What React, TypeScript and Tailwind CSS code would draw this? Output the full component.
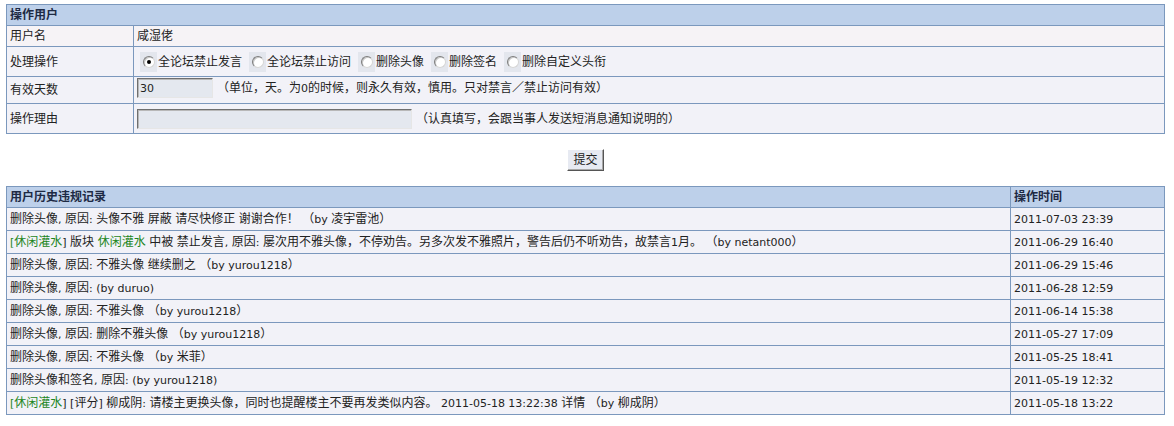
import React from "react";

function T({ s }: { s: string }) {
  const parts = s.split(/([\u0020-\u007e]+)/);
  return (
    <>
      {parts.map((p, i) =>
        p === "" ? null : /[\u0020-\u007e]/.test(p[0]) ? (
          <span key={i} className="font-['DejaVu_Sans',sans-serif] text-[11px]">
            {p}
          </span>
        ) : (
          <span key={i}>{p}</span>
        )
      )}
    </>
  );
}

function Radio({ checked }: { checked?: boolean }) {
  return (
    <span className="inline-flex items-center justify-center w-[17px] h-[20px] bg-[#e3e6ed] ml-[3px] shrink-0">
      <span className="relative block w-[12px] h-[12px] rounded-full bg-white border border-t-[#7c7c7c] border-l-[#7c7c7c] border-b-[#d6d6d6] border-r-[#d6d6d6] shadow-[inset_1px_1px_0_#c8c8c8]">
        {checked && <span className="absolute left-[3px] top-[3px] w-[4px] h-[4px] rounded-full bg-black" />}
      </span>
    </span>
  );
}

function G({ s }: { s: string }) {
  return (
    <span className="text-[#1d861d]">
      <T s={s} />
    </span>
  );
}

const rows: { c: React.ReactNode; t: string }[] = [
  { c: <T s="删除头像, 原因: 头像不雅 屏蔽 请尽快修正 谢谢合作！ （by 凌宇雷池）" />, t: "2011-07-03 23:39" },
  {
    c: (
      <>
        <G s="[休闲灌水" />
        <T s="] 版块 " />
        <G s="休闲灌水" />
        <T s=" 中被 禁止发言, 原因: 屡次用不雅头像，不停劝告。另多次发不雅照片，警告后仍不听劝告，故禁言1月。 （by netant000）" />
      </>
    ),
    t: "2011-06-29 16:40",
  },
  { c: <T s="删除头像, 原因: 不雅头像 继续删之 （by yurou1218）" />, t: "2011-06-29 15:46" },
  { c: <T s="删除头像, 原因: (by duruo)" />, t: "2011-06-28 12:59" },
  { c: <T s="删除头像, 原因: 不雅头像 （by yurou1218）" />, t: "2011-06-14 15:38" },
  { c: <T s="删除头像, 原因: 删除不雅头像 （by yurou1218）" />, t: "2011-05-27 17:09" },
  { c: <T s="删除头像, 原因: 不雅头像 （by 米菲）" />, t: "2011-05-25 18:41" },
  { c: <T s="删除头像和签名, 原因: (by yurou1218)" />, t: "2011-05-19 12:32" },
  {
    c: (
      <>
        <G s="[休闲灌水" />
        <T s="] [评分] 柳成阴: 请楼主更换头像，同时也提醒楼主不要再发类似内容。 2011-05-18 13:22:38 详情 （by 柳成阴）" />
      </>
    ),
    t: "2011-05-18 13:22",
  },
];

const options = ["全论坛禁止发言", "全论坛禁止访问", "删除头像", "删除签名", "删除自定义头衔"];

export default function App() {
  return (
    <div className="w-[1174px] min-h-[426px] bg-white text-[12px] text-[#222] font-['Liberation_Sans','Noto_Sans_CJK_SC',sans-serif] pt-[4px]">
      {/* Operation table */}
      <div className="ml-[6px] w-[1159px] border border-[#7b98bd]">
        <div className="h-[20px] bg-[#bdd0ea] pl-[3px] font-bold leading-[20px] text-[#1e2a44]">操作用户</div>
        <div className="flex h-[21px] border-t border-[#7b98bd] bg-[#f6f3f6]">
          <div className="w-[127px] border-r border-[#7b98bd] pl-[3px] flex items-center">用户名</div>
          <div className="flex-1 pl-[3px] flex items-center">咸湿佬</div>
        </div>
        <div className="flex h-[30px] border-t border-[#7b98bd] bg-[#f2f2f8]">
          <div className="w-[127px] border-r border-[#7b98bd] pl-[3px] flex items-center">处理操作</div>
          <div className="flex-1 pl-[3px] flex items-center">
            {options.map((o, i) => (
              <span key={o} className="flex items-center mr-[4px]">
                <Radio checked={i === 0} />
                <span className="ml-[1px]">{o}</span>
              </span>
            ))}
          </div>
        </div>
        <div className="flex h-[27px] border-t border-[#7b98bd] bg-[#f2f2f8]">
          <div className="w-[127px] border-r border-[#7b98bd] pl-[3px] flex items-center">有效天数</div>
          <div className="flex-1 pl-[3px] flex items-start pt-[1px]">
            <div className="w-[76px] h-[20px] bg-[#e4e8ef] border border-t-[#6f6f6f] border-l-[#6f6f6f] border-r-[#e6e6e6] border-b-[#e6e6e6] shadow-[inset_1px_1px_0_#b8b8b8] pl-[2px] leading-[18px]">
              <T s="30" />
            </div>
            <span className="ml-[4px] leading-[20px]">
              <T s="（单位，天。为0的时候，则永久有效，慎用。只对禁言／禁止访问有效）" />
            </span>
          </div>
        </div>
        <div className="flex h-[30px] border-t border-[#7b98bd] bg-[#f2f2f8]">
          <div className="w-[127px] border-r border-[#7b98bd] pl-[3px] flex items-center">操作理由</div>
          <div className="flex-1 pl-[3px] flex items-center">
            <div className="w-[275px] h-[20px] bg-[#e4e8ef] border border-t-[#6f6f6f] border-l-[#6f6f6f] border-r-[#e6e6e6] border-b-[#e6e6e6] shadow-[inset_1px_1px_0_#b8b8b8]" />
            <span className="ml-[4px]">（认真填写，会跟当事人发送短消息通知说明的）</span>
          </div>
        </div>
      </div>

      {/* Submit */}
      <div className="flex justify-center mt-[15px] ml-[6px] w-[1159px]">
        <button className="w-[37px] h-[22px] bg-[#e7eaf2] border border-t-white border-l-white border-r-[#555] border-b-[#555] shadow-[inset_-1px_-1px_0_#a8a8a8] text-[12px] text-[#222] leading-[18px] p-0">
          提交
        </button>
      </div>

      {/* History table */}
      <div className="ml-[6px] mt-[15px] w-[1159px] border border-[#7b98bd]">
        <div className="flex h-[20px] bg-[#bdd0ea] font-bold text-[#1e2a44]">
          <div className="w-[1004px] border-r border-[#7b98bd] pl-[3px] flex items-center">用户历史违规记录</div>
          <div className="flex-1 pl-[3px] flex items-center">操作时间</div>
        </div>
        {rows.map((r, i) => (
          <div key={i} className="flex h-[23px] border-t border-[#7b98bd] bg-[#f2f2f8]">
            <div className="w-[1004px] border-r border-[#7b98bd] pl-[3px] flex items-center">
              <span className="whitespace-nowrap">{r.c}</span>
            </div>
            <div className="flex-1 pl-[3px] flex items-center">
              <span>
                <T s={r.t} />
              </span>
            </div>
          </div>
        ))}
      </div>
    </div>
  );
}
